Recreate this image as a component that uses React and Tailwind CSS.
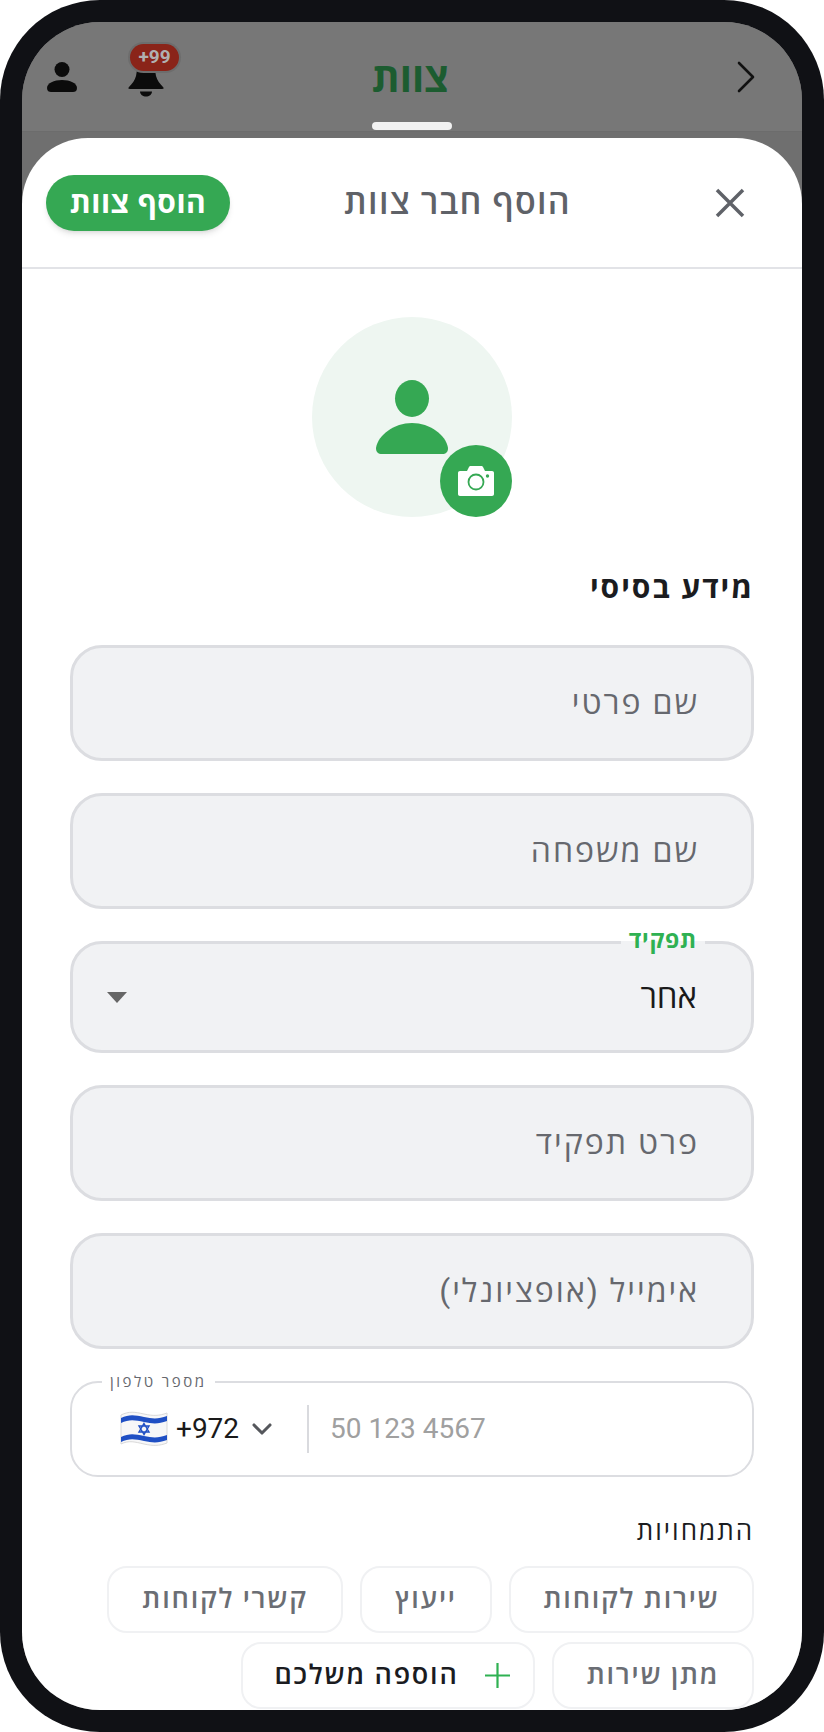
import React from 'react';
import { ChevronDown } from 'lucide-react';

const font = { fontFamily: 'Roboto, "Noto Sans", "Open Sans", sans-serif' };

function TextField({ label }) {
    return (
        <div className="h-[116px] rounded-[32px] border-[3px] border-[#dcdde1] bg-[#f1f2f4] flex items-center pr-[52px] text-[32px] tracking-[2px] text-[#66686e]">
            <span>{label}</span>
        </div>
    );
}

function Chip({ children, className = '' }) {
    return (
        <div className={`h-[67px] rounded-[20px] border-2 border-[#f0f1f3] bg-white flex items-center justify-center text-[27px] font-semibold tracking-[1.8px] ${className}`}>
            {children}
        </div>
    );
}

function BellIcon() {
    return (
        <svg width="36" height="28" viewBox="0 0 36 28" fill="#0b0b0b">
            <path d="M9 0h18l1 6c1 4 4 8 7 11 1 1 1 2-1 2H2c-2 0-2-1-1-2 3-3 6-7 7-11z" />
            <path d="M12 21.500h12c0 3-3 5-6 5s-6-2-6-5z" />
        </svg>
    );
}

function Flag() {
    return (
        <svg width="48" height="36" viewBox="0 0 48 36">
            <path d="M1 4c8-4 14-3 23-1s15 2 23-1v30c-8 3-14 3-23 1S9 29 1 33z" fill="#f7f7f8" stroke="#d9d9d9" strokeWidth="1" />
            <path d="M1 7c8-4 14-3 23-1s15 2 23-1v5c-8 3-14 3-23 1S9 8 1 12z" fill="#1f4fc4" />
            <path d="M1 26c8-4 14-3 23-1s15 2 23-1v5c-8 3-14 3-23 1S9 27 1 31z" fill="#1f4fc4" />
            <path d="M24 12.500l5 8.500H19zM24 23.500l-5-8.500h10z" fill="none" stroke="#1f4fc4" strokeWidth="1.400" />
        </svg>
    );
}

export default function App() {
    return (
        <div className="w-[824px] h-[1732px] bg-white" style={font}>
            <div className="w-full h-full rounded-[100px] bg-[#101115] p-[22px]">
                <div dir="rtl" className="relative w-full h-full rounded-[78px] overflow-hidden bg-[#6f6f6f] flex flex-col">
                    {/* Dimmed page header */}
                    <div className="h-[110px] shrink-0 bg-[#777777] border-b border-[#6c6c6c] flex items-start pt-[34px] pr-[47px] pl-[25px]">
                        <svg width="18" height="32" viewBox="0 0 18 32" fill="none" stroke="#111" strokeWidth="2.600" strokeLinecap="round" strokeLinejoin="round" className="mt-[5px]">
                            <path d="M2 2l14 14L2 30" />
                        </svg>
                        <div className="mr-[288px] text-[40px] leading-[46px] font-bold text-[#1c5c30]">צוות</div>
                        <div className="mr-auto flex items-start gap-[51px] flex-row-reverse">
                            <svg width="30" height="30" viewBox="0 0 30 30" fill="#0b0b0b" className="mt-[6px]">
                                <ellipse cx="15" cy="7.500" rx="7.500" ry="7.500" />
                                <path d="M0 26c0-5 7-8 15-8s15 3 15 8c0 3-2 4-4 4H4c-2 0-4-1-4-4z" />
                            </svg>
                            <div className="relative w-[36px] h-[28px] mt-[14px]">
                                <BellIcon />
                                <div className="absolute top-[-26px] left-[2px] w-[49px] h-[27px] rounded-full bg-[#8a2419] ring-2 ring-[#6d6d6d] flex items-center justify-center text-[19px] font-bold text-[#b0b0b0]">
                                    <span dir="ltr">+99</span>
                                </div>
                            </div>
                        </div>
                    </div>

                    {/* Drag handle */}
                    <div className="absolute top-[100px] left-[350px] w-[80px] h-[8px] rounded-full bg-[#f1f1f1]"></div>

                    {/* Sheet */}
                    <div className="mt-[6px] flex-1 bg-white rounded-t-[66px] overflow-hidden">
                        <div className="h-[131px] border-b-2 border-[#e2e3e7] flex items-center pr-[57px] pl-[24px]">
                            <svg width="30" height="30" viewBox="0 0 30 30" fill="none" stroke="#5f6268" strokeWidth="3.500">
                                <path d="M2 2l26 26M28 2L2 28" />
                            </svg>
                            <div className="mr-[144px] text-[34px] font-semibold tracking-[1.300px] text-[#5f6268]">הוסף חבר צוות</div>
                            <button className="mr-auto w-[184px] h-[56px] rounded-full bg-[#35a853] shadow-md text-[30px] font-bold tracking-[0.500px] text-white">הוסף צוות</button>
                        </div>

                        <div className="px-[48px]">
                            {/* Avatar */}
                            <div className="flex justify-center pt-[48px]">
                                <div className="relative w-[200px] h-[200px] rounded-full bg-[#eef6f1]">
                                    <svg width="72" height="74" viewBox="0 0 72 74" fill="#35a853" className="absolute left-[64px] top-[63px]">
                                        <ellipse cx="36" cy="18.500" rx="17" ry="18.500" />
                                        <path d="M0 68c2-13 18-25 36-25s34 12 36 25c0 4-2 6-6 6H6c-4 0-6-2-6-6z" />
                                    </svg>
                                    <div className="absolute right-0 bottom-0 w-[72px] h-[72px] rounded-full bg-[#35a853] flex items-center justify-center">
                                        <svg width="36" height="30" viewBox="0 0 36 30">
                                            <path d="M2 5h7l2-4c.3-.6.8-1 1.500-1h11c.7 0 1.200.4 1.500 1l2 4h7c1.200 0 2 .8 2 2v21c0 1.200-.8 2-2 2H2c-1.200 0-2-.8-2-2V7c0-1.200.8-2 2-2z" fill="#fff" />
                                            <circle cx="18" cy="16" r="7.500" fill="#fff" stroke="#35a853" strokeWidth="1.800" />
                                            <circle cx="29.500" cy="10" r="1.700" fill="#35a853" />
                                        </svg>
                                    </div>
                                </div>
                            </div>

                            <h2 className="mt-[51px] text-[30px] leading-[40px] font-bold tracking-[2px] text-[#1b1c1f]">מידע בסיסי</h2>

                            <div className="mt-[37px] flex flex-col gap-[32px]">
                                <TextField label="שם פרטי" />
                                <TextField label="שם משפחה" />
                                <div className="relative h-[112px] rounded-[32px] border-[3px] border-[#dcdde1] bg-[#f1f2f4] flex items-center justify-between pr-[54px] pl-[34px]">
                                    <span className="text-[33px] text-[#1a1a1a]">אחר</span>
                                    <svg width="20" height="11" viewBox="0 0 20 11" fill="#666">
                                        <path d="M0 0h20L10 11z" />
                                    </svg>
                                    <span className="absolute top-[-16px] right-[46px] bg-[linear-gradient(to_bottom,#ffffff_50%,#f1f2f4_50%)] px-[8px] text-[23px] leading-[26px] font-bold tracking-[0.800px] text-[#2fb152]">תפקיד</span>
                                </div>
                                <TextField label="פרט תפקיד" />
                                <TextField label="אימייל (אופציונלי)" />
                            </div>

                            {/* Phone */}
                            <div dir="ltr" className="relative mt-[32px] h-[96px] rounded-[28px] border-2 border-[#dcdde1] bg-white flex items-center pl-[48px]">
                                <span className="absolute top-[-11px] left-[30px] bg-white px-[8px] text-[15px] leading-[20px] tracking-[2.500px] text-[#66686e]" dir="rtl">מספר טלפון</span>
                                <Flag />
                                <span className="ml-[8px] text-[28px] text-[#1a1a1a]">+972</span>
                                <ChevronDown className="ml-[7px] mr-[-7px] w-[32px] h-[32px] text-[#55575c]" strokeWidth={2.300} />
                                <div className="ml-[36px] w-[2px] h-[48px] bg-[#d9dade]"></div>
                                <span className="ml-[21px] text-[28px] text-[#a0a0a0]">50 123 4567</span>
                            </div>

                            <div className="mt-[37px] text-[26px] leading-[34px] font-medium tracking-[2px] text-[#1b1c1f]">התמחויות</div>

                            <div className="mt-[18px] flex flex-wrap gap-x-[17px] gap-y-[9px]">
                                <Chip className="w-[245px] text-[#6b6e74]">שירות לקוחות</Chip>
                                <Chip className="w-[132px] text-[#6b6e74]">ייעוץ</Chip>
                                <Chip className="w-[236px] text-[#6b6e74]">קשרי לקוחות</Chip>
                                <Chip className="w-[202px] text-[#6b6e74]">מתן שירות</Chip>
                                <Chip className="w-[294px] gap-[26px] pl-[8px] text-[#1b1c1f]">
                                    <svg width="25" height="25" viewBox="0 0 25 25" fill="none" stroke="#2fb152" strokeWidth="2.200">
                                        <path d="M12.500 0v25M0 12.500h25" />
                                    </svg>
                                    <span>הוספה משלכם</span>
                                </Chip>
                            </div>
                        </div>
                    </div>
                </div>
            </div>
        </div>
    );
}
